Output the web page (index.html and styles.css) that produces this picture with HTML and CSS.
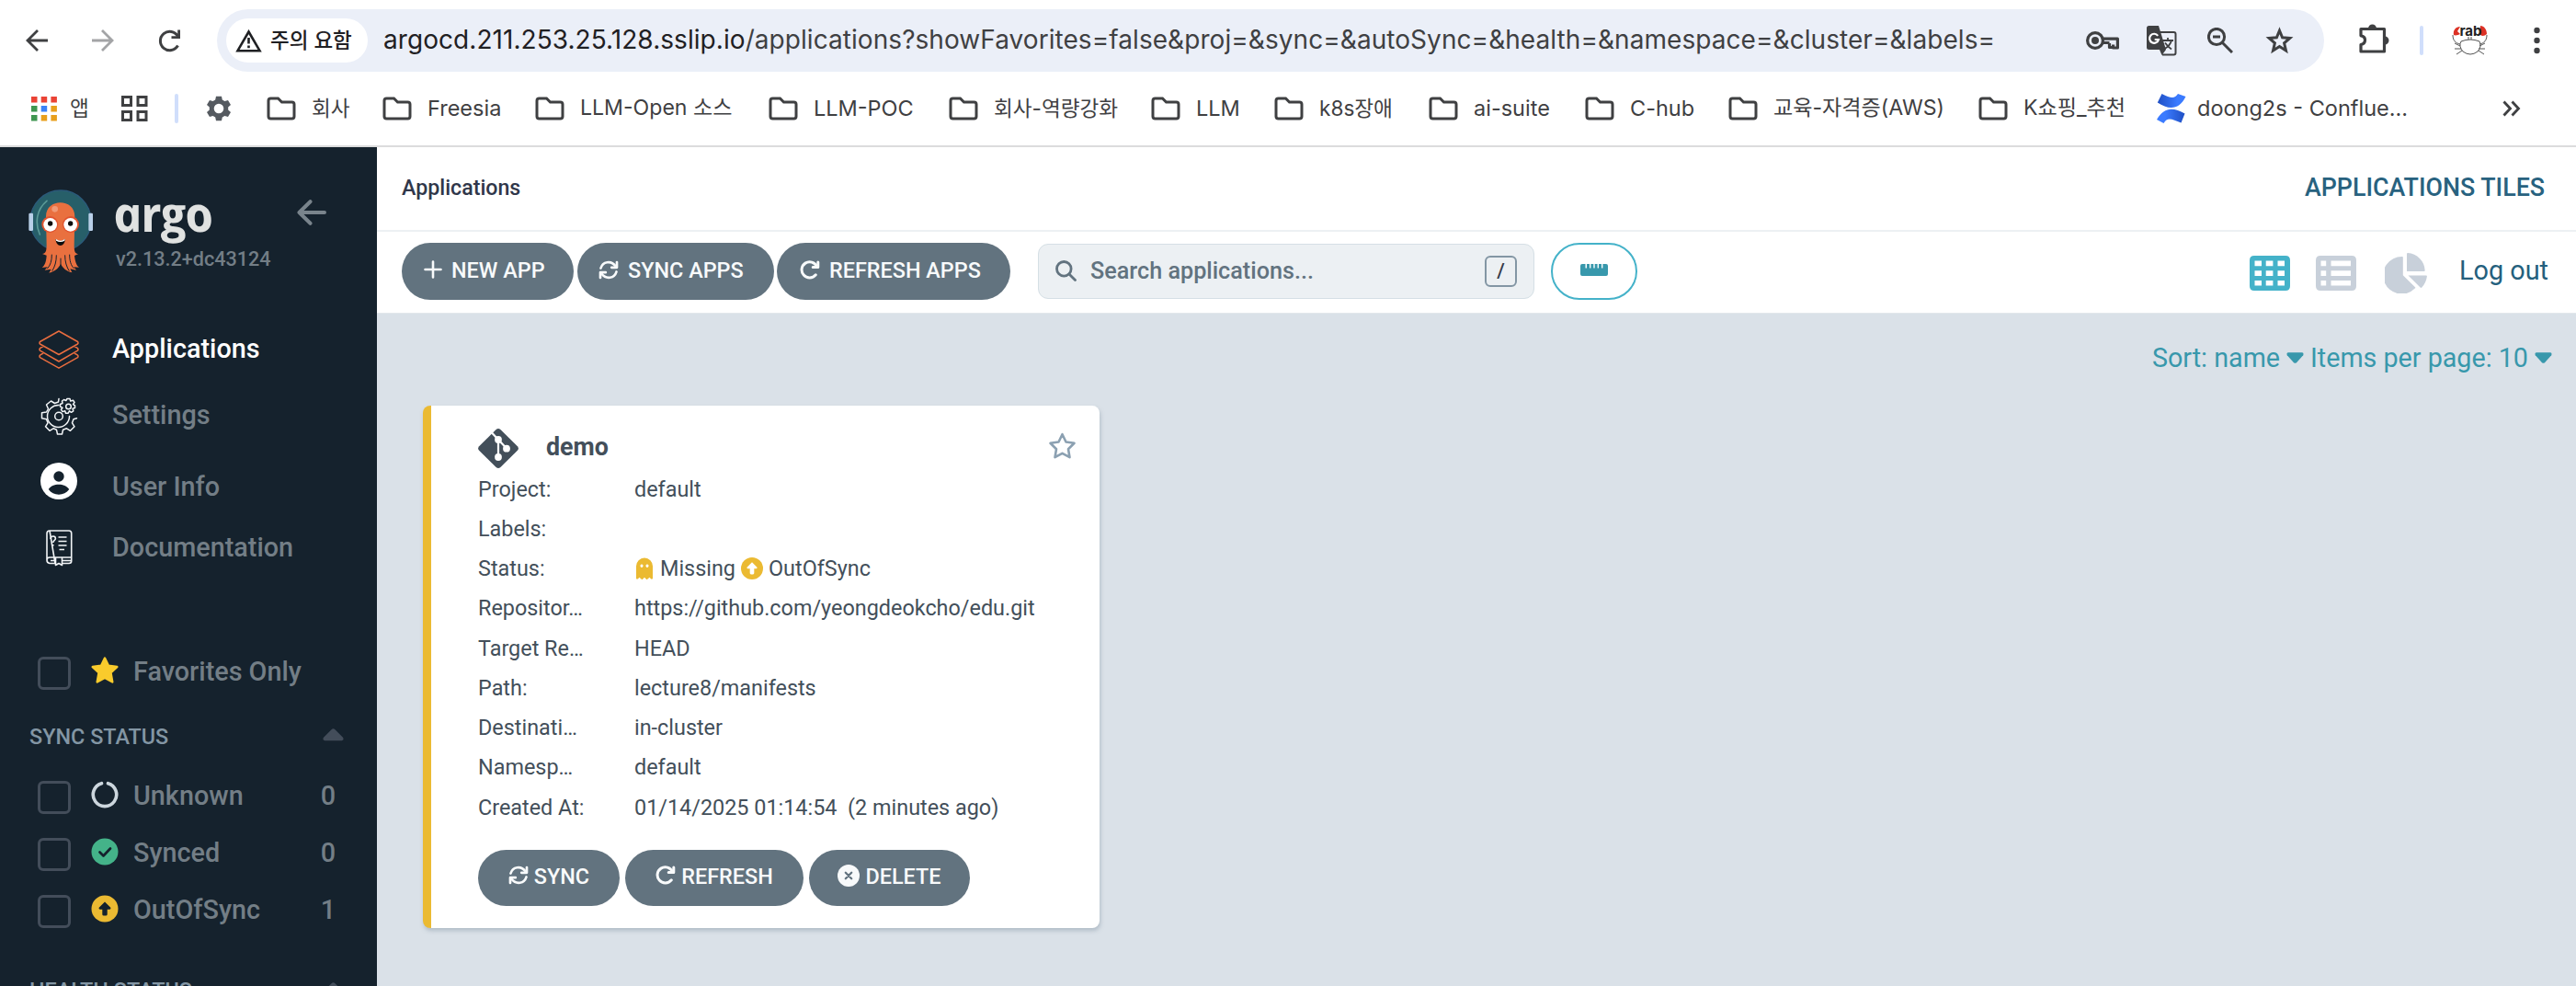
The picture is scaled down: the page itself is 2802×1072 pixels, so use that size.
FILE: index.html
```html
<!DOCTYPE html>
<html lang="ko">
<head>
<meta charset="utf-8">
<title>Applications Tiles - Argo CD</title>
<link rel="stylesheet" href="styles.css">
</head>
<body>
<svg class="defs" width="0" height="0">
  <defs>
    <symbol id="folder" viewBox="0 0 32 26"><path d="M4.500 2h8l4 4h11a2.500 2.500 0 0 1 2.500 2.500v13a2.500 2.500 0 0 1-2.500 2.500h-23a2.500 2.500 0 0 1-2.500-2.500v-17a2.500 2.500 0 0 1 2.500-2.500z" fill="none" stroke="#3f4042" stroke-width="3"/></symbol>
    <symbol id="sync" viewBox="0 0 22 21"><g fill="none" stroke="#f8fafb" stroke-width="2.700" stroke-linecap="round" stroke-linejoin="round"><path d="M2.500 8.500C4.500 1.500 13.500-.500 18.700 6.500"/><path d="M20 2v5.800h-5.800"/><path d="M19.500 12.500C17.500 19.500 8.500 21.500 3.300 14.500"/><path d="M2 19v-5.800h5.800"/></g></symbol>
    <symbol id="refresh" viewBox="0 0 22 21"><g fill="none" stroke="#f8fafb" stroke-width="3" stroke-linecap="round" stroke-linejoin="round"><path d="M17.300 15.800A8.600 8.600 0 1 1 18.500 6.800"/><path d="M19.800 2v5.600h-5.600"/></g></symbol>
    <symbol id="caret-up" viewBox="0 0 23 14"><path d="M9.500 1.200q2-2 4 0l8.500 8.500q1.600 3-1.200 3.600H2.200q-2.800-.600-1.200-3.600z" fill="#434d5a"/></symbol>
    <symbol id="caret-down" viewBox="0 0 19 12"><path d="M8 11.200q1.500 1.200 3 0l7.200-8q1-2.400-1-3H1.800q-2 .600-1 3z" fill="#3898ac"/></symbol>
  </defs>
</svg>

<header class="browser">
  <div class="toolbar">
    <svg class="back" width="24" height="24" viewBox="0 0 24 24" fill="none" stroke="#3f4042" stroke-width="2.800"><path d="M24 12H2M13 1 2 12l11 11"/></svg>
    <svg class="forward" width="24" height="24" viewBox="0 0 24 24" fill="none" stroke="#a3a4a6" stroke-width="2.800"><path d="M0 12h22M11 1l11 11-11 11"/></svg>
    <svg class="reload" width="25" height="25" viewBox="0 0 25 25"><path d="M21.500 17.500A10.200 10.200 0 1 1 21.500 7.500" fill="none" stroke="#3f4042" stroke-width="3"/><path d="M24 .5V10H14.500V7.200h6.700V.5z" fill="#3f4042"/></svg>
    <div class="omnibox">
      <div class="chip">
        <svg width="29" height="25" viewBox="0 0 29 25"><path d="M14.500 2.500 26.500 23.200H2.500z" fill="none" stroke="#1f2023" stroke-width="2.600"/><path d="M14.500 9v6.500M14.500 17.500v2.800" stroke="#1f2023" stroke-width="2.600"/></svg>
        <span class="t">주의 요함</span>
      </div>
      <span class="url t"><b>argocd.211.253.25.128.sslip.io</b>/applications?showFavorites=false&amp;proj=&amp;sync=&amp;autoSync=&amp;health=&amp;namespace=&amp;cluster=&amp;labels=</span>
      <div class="omni-icons">
        <svg width="36" height="20" viewBox="0 0 36 20"><circle cx="10" cy="10" r="8.400" fill="none" stroke="#3f4042" stroke-width="3.200"/><circle cx="10" cy="10" r="4" fill="#3f4042"/><path d="M18 8.200h16.400V18h-4.800v-3.500M25.500 13v4.500h4.500M18 12.500h7.500" fill="none" stroke="#3f4042" stroke-width="3.200" stroke-linejoin="round"/></svg>
        <svg width="33" height="33" viewBox="0 0 33 33"><path d="M14 7h15.500a2 2 0 0 1 2 2v20.500a2 2 0 0 1-2 2H17" fill="none" stroke="#3f4042" stroke-width="2"/><path d="M2.500 0H13l8 26-4.500 6-2.500-6H2.500A2.500 2.500 0 0 1 0 23.500v-21A2.500 2.500 0 0 1 2.500 0z" fill="#3f4042"/><path d="M17 16h12M23 13v3M27 16c-1 4-4 7-7.500 9M20 18.500c2 3 4 5 7 7" fill="none" stroke="#3f4042" stroke-width="1.800"/><path d="M12.200 10.800A5 5 0 1 0 13 15H8.700" fill="none" stroke="#fff" stroke-width="2.200"/></svg>
        <svg width="28" height="28" viewBox="0 0 28 28" fill="none" stroke="#3f4042" stroke-width="3"><circle cx="10" cy="10" r="8.600"/><path d="M16.500 16.500 27 27M6 10h8"/></svg>
        <svg width="31" height="30" viewBox="0 0 31 30"><path d="M15.500 4.200l3.100 7.600 8.200.7-6.200 5.400 1.900 8.100-7-4.400-7 4.400 1.900-8.100-6.200-5.400 8.200-.7z" fill="none" stroke="#3f4042" stroke-width="3"/></svg>
      </div>
    </div>
    <svg class="puzzle" width="33" height="33" viewBox="0 0 33 33"><path d="M2 5.500h25.500V30H2v-7.500c6-1 6-9 0-9.700z" fill="none" stroke="#3f4042" stroke-width="3.200" stroke-linejoin="round"/><path d="M10 5a4.500 4.500 0 0 1 9 0zM28 13.500a4.500 4.500 0 0 1 0 9z" fill="#3f4042"/></svg>
    <i class="vline"></i>
    <svg class="crab" width="40" height="36" viewBox="0 0 40 36"><path d="M9 3C4 3 1 7 2 12c2 1 5 0 7-1L6 8zM31 2c4 0 7 4 7 9-3 3-7 2-8 0z" fill="#dc3125"/><g fill="none" stroke="#555" stroke-width="1"><path d="M1 12c0 6 3 9 8 10M38 12c0 6-3 9-8 10"/><path d="M10 19q10-4 20 0 3 5-2 11-8 6-16 0-5-6-2-11zM3 21l6 3M3 27l7 0M5 33l6-4M36 21l-6 3M36 27h-7M35 33l-6-4M18 14v3M21 14v3"/></g><text x="20.500" y="13" text-anchor="middle" class="crab-text">rab</text></svg>
    <svg class="dots" width="7" height="30" viewBox="0 0 7 30" fill="#3f4042"><circle cx="3.500" cy="4" r="3.200"/><circle cx="3.500" cy="15" r="3.200"/><circle cx="3.500" cy="26" r="3.200"/></svg>
  </div>
  <nav class="bookmarks">
    <span class="bm ko apps"><svg width="28" height="28" viewBox="0 0 28 28"><path d="M0 1h6.500v6.500H0zM10.700 1h6.500v6.500h-6.500zM21.400 1h6.500v6.500h-6.500z" fill="#ea4335"/><path d="M0 11h6.500v6.500H0zM0 21h6.500v6.500H0z" fill="#3f9650"/><path d="M10.700 11h6.500v6.500h-6.500z" fill="#3b82f6"/><path d="M21.400 11h6.500v6.500h-6.500zM10.700 21h6.500v6.500h-6.500zM21.400 21h6.500v6.500h-6.500z" fill="#e89f1c"/></svg><span class="t">앱</span></span>
    <svg width="29" height="28" viewBox="0 0 29 28" fill="none" stroke="#3f4042" stroke-width="3"><path d="M1.500 1.500h9v9h-9zM18 1.500h9v9h-9zM1.500 17.500h9v9h-9zM18 17.500h9v9h-9z"/></svg>
    <i class="vline"></i>
    <svg width="28" height="28" viewBox="0 0 28 28"><path d="M14 8.700a5.300 5.300 0 1 0 0 10.600 5.300 5.300 0 0 0 0-10.600zM11 .8h6l.8 3.700 2.600 1.500 3.600-1.100 3 5.100-2.800 2.500v3l2.800 2.500-3 5.100-3.600-1.100-2.600 1.500-.8 3.700h-6l-.8-3.700-2.600-1.500L4 23.100 1 18l2.800-2.500v-3L1 10l3-5.100L7.600 6l2.600-1.500z" fill="#555a60" fill-rule="evenodd"/></svg>
    <span class="bm ko"><svg width="32" height="26"><use href="#folder"/></svg><span class="t">회사</span></span>
    <span class="bm"><svg width="32" height="26"><use href="#folder"/></svg><span class="t">Freesia</span></span>
    <span class="bm mix"><svg width="32" height="26"><use href="#folder"/></svg><span class="t">LLM-Open 소스</span></span>
    <span class="bm"><svg width="32" height="26"><use href="#folder"/></svg><span class="t">LLM-POC</span></span>
    <span class="bm ko"><svg width="32" height="26"><use href="#folder"/></svg><span class="t">회사-역량강화</span></span>
    <span class="bm"><svg width="32" height="26"><use href="#folder"/></svg><span class="t">LLM</span></span>
    <span class="bm ko"><svg width="32" height="26"><use href="#folder"/></svg><span class="t">k8s장애</span></span>
    <span class="bm"><svg width="32" height="26"><use href="#folder"/></svg><span class="t">ai-suite</span></span>
    <span class="bm"><svg width="32" height="26"><use href="#folder"/></svg><span class="t">C-hub</span></span>
    <span class="bm mix"><svg width="32" height="26"><use href="#folder"/></svg><span class="t">교육-자격증(AWS)</span></span>
    <span class="bm mix"><svg width="32" height="26"><use href="#folder"/></svg><span class="t">K쇼핑_추천</span></span>
    <span class="bm conf"><svg width="32" height="32" viewBox="0 0 32 32"><defs><linearGradient id="cf1" x1="0" x2="1"><stop offset="0" stop-color="#1f4fc4"/><stop offset=".7" stop-color="#3b7bff"/></linearGradient><linearGradient id="cf2" x1="1" x2="0"><stop offset="0" stop-color="#1f4fc4"/><stop offset=".7" stop-color="#3b7bff"/></linearGradient></defs><path d="M5.500 0 .8 9.500C13 17.500 24 18 31.500 3L23 0c-4 6-8 4.500-17.500 0z" fill="url(#cf1)"/><path d="M26.500 31.500 30.500 21.500C18 14.500 8 14 0 28l7.500 4c4-7 8.500-5 19-.5z" fill="url(#cf2)"/></svg><span class="t">doong2s - Conflue...</span></span>
    <svg width="20" height="18" viewBox="0 0 20 18" fill="none" stroke="#3f4042" stroke-width="2.800"><path d="M1.500 1.500 8.500 9l-7 7.500M10.500 1.500l7 7.500-7 7.500"/></svg>
  </nav>
</header>

<div class="app">
  <aside class="sidebar">
    <div class="brand">
      <svg class="octopus" width="71" height="91" viewBox="92 138 213 273">
        <circle cx="197" cy="240" r="99" fill="#275f69" stroke="#2b5a7a" stroke-width="4"/>
        <path d="M152 175c-34 28-40 72-23 110" fill="none" stroke="#5b9a97" stroke-width="5" stroke-linecap="round"/>
        <rect x="93" y="215" width="14" height="58" rx="4" fill="#b8cfe8"/><rect x="288" y="215" width="14" height="58" rx="4" fill="#b8cfe8"/>
        <path d="M149 226c0-60 94-60 94 0l-2 95c0 22 4 27 14 27l-13 6c2 18 6 32 15 38l-17-1 8 10-20-4 6 12c-20-4-30-16-37-28-8 14-17 24-38 29l7-12-21 3 9-10-18 2c10-8 14-22 15-40l-14-5c11-2 14-8 14-30z" fill="#e9703f"/>
        <path d="M168 350c0 20-4 36-15 46M183 352c0 22-5 38-14 52M197 362v30M211 352c0 22 5 38 14 52M226 350c0 20 4 36 15 46" stroke="#15222d" stroke-width="3" fill="none"/>
        <circle cx="178" cy="202" r="10" fill="#f09a77"/>
        <circle cx="162" cy="252" r="27" fill="#e0532f"/><circle cx="230" cy="252" r="27" fill="#e0532f"/>
        <circle cx="163" cy="253" r="22" fill="#fff"/><circle cx="229" cy="253" r="22" fill="#fff"/>
        <circle cx="163" cy="249" r="8" fill="#0d0d0d"/><circle cx="229" cy="249" r="8" fill="#0d0d0d"/>
        <path d="M180 300q17 12 32 0-3 21-16 21-13 0-16-21z" fill="#0d0d0d"/><path d="M181 299q16 12 30 0l-1 6q-14 8-28 0z" fill="#fff"/>
      </svg>
      <div class="brand-text">
        <span class="wordmark t">argo</span>
        <span class="version t">v2.13.2+dc43124</span>
      </div>
      <svg class="collapse" width="32" height="28" viewBox="0 0 32 28" fill="none" stroke="#79848c" stroke-width="4" stroke-linecap="round" stroke-linejoin="round"><path d="M30 14H2.500M14.500 2.200 2.500 14l12 11.800"/></svg>
    </div>
    <nav class="nav">
      <a class="nav-row active"><svg width="44" height="42" viewBox="0 0 44 42" fill="none" stroke="#e96d3f" stroke-width="1.500" stroke-linejoin="round"><path d="M22 1 42.500 12.500q1 1.500 0 2.500L22 26.500 1.500 15q-1-1 0-2.500zM5 17.500l-3.500 2.200q-1 1.300 0 2.500L22 34l20.500-11.800q1-1.200 0-2.500L39 17.500M5 25l-3.500 2.200q-1 1.300 0 2.500L22 41.200l20.500-11.500q1-1.200 0-2.500L39 25"/></svg><span class="t">Applications</span></a>
      <a class="nav-row"><svg width="44" height="42" viewBox="0 0 44 42" fill="none" stroke="#f2f5f7" stroke-width="1.500" stroke-linejoin="round" stroke-linecap="round"><path d="M22 2.500l-.5 3.500-4 1.500-4-2.500-5 4 2 4.500-2 3.500-5 .8v6l5 1 1.500 4-2.500 4 4.500 4.500 4-2.500 3.500 1.500 1 4.700h5l1-4.700 4-1.500 4 2.500 4.500-4.500-2.500-4 1.500-4 3.500-1"/><path d="M22 9.500a12 12 0 1 0 11.500 12"/><circle cx="22" cy="21.500" r="4.300"/><path d="M31 2.500h3l.7 2.500 2.800-.8 1.500 2.300-1.500 2.200 2 1.300v2.500l-2.500.8.8 2.500-2.300 1.500-2-1.500-1.500 2.500h-2.500l-.8-2.500-2.700.8-1.500-2.300 1.500-2-2.500-1.300v-2.500l2.500-1-.5-2.500 2-1.500 2.300 1z"/><circle cx="32.500" cy="11" r="2.800"/></svg><span class="t">Settings</span></a>
      <a class="nav-row user"><svg width="44" height="42" viewBox="0 0 44 42"><circle cx="22" cy="21" r="20" fill="#fff"/><circle cx="22" cy="16" r="5.700" fill="#15222d"/><path d="M10.800 30c4-7 18-7 22.400 0-5 7.500-17.500 7.500-22.400 0z" fill="#15222d"/></svg><span class="t">User Info</span></a>
      <a class="nav-row"><svg width="44" height="42" viewBox="0 0 44 42" fill="none" stroke="#f2f5f7" stroke-width="1.600" stroke-linejoin="round"><path d="M12 2h21q2.700 0 2.700 2.700V35q0 2.500-2.700 2.500h-7M18 37.500h-6Q9 37 9 34V5q0-3 3-3zM9 34q0-3 3-3h23.500M13 34.500h5M26 34.500h9.500M18.500 31v8.500l3.500-2 3.500 2V31"/><path d="M21.500 9h9M21.500 13.500h9M21.500 18h9M22.500 22.500h5.500M13 11q.300-3 2.800-3t2.600 2.500c0 2-2.600 2-2.600 4.500m0 2v1.500"/></svg><span class="t">Documentation</span></a>
    </nav>
    <div class="filters">
      <label class="filter fav"><i class="check"></i><svg width="30" height="30" viewBox="0 0 30 30"><path d="M15 1.500l4 8.300 9.300 1.200-6.800 6.300 1.800 10.200L15 23l-8.300 4.500 1.800-10.200L1.700 11l9.300-1.200z" fill="#f9cb2c" stroke="#f9cb2c" stroke-width="2.400" stroke-linejoin="round"/></svg><span class="t">Favorites Only</span></label>
      <div class="group"><span class="t">SYNC STATUS</span><svg width="23" height="14"><use href="#caret-up"/></svg></div>
      <label class="filter"><i class="check"></i><svg width="30" height="30" viewBox="0 0 30 30"><path d="M18.500 2.700a12.700 12.700 0 1 1-7 0" fill="none" stroke="#ccd6dd" stroke-width="3.600" stroke-linecap="round"/></svg><span class="t">Unknown</span><b>0</b></label>
      <label class="filter"><i class="check"></i><svg width="30" height="30" viewBox="0 0 30 30"><circle cx="15" cy="15" r="14.500" fill="#44b389"/><path d="M9.500 15.500l4 4 7.500-8" fill="none" stroke="#15222d" stroke-width="2.700" stroke-linecap="round" stroke-linejoin="round"/></svg><span class="t">Synced</span><b>0</b></label>
      <label class="filter"><i class="check"></i><svg width="30" height="30" viewBox="0 0 30 30"><circle cx="15" cy="15" r="14.500" fill="#ebba32"/><path d="M15 7.500l6.300 6.300q.8 1.600-1 2h-2.600v5.400q-.2 1.300-1.500 1.300h-2.400q-1.300 0-1.500-1.300v-5.400H9.700q-1.800-.4-1-2z" fill="#15222d"/></svg><span class="t">OutOfSync</span><b>1</b></label>
      <div class="group health"><span class="t">HEALTH STATUS</span><svg width="23" height="14"><use href="#caret-up"/></svg></div>
    </div>
  </aside>

  <main class="main">
    <div class="titlebar"><span class="crumb t">Applications</span><span class="page-title t">APPLICATIONS TILES</span></div>
    <div class="actions">
      <button class="btn new"><svg width="20" height="20" viewBox="0 0 20 20" stroke="#f8fafb" stroke-width="2.600" stroke-linecap="round"><path d="M10 1.500v17M1.500 10h17"/></svg><span class="t">NEW APP</span></button>
      <button class="btn sync"><svg width="22" height="21"><use href="#sync"/></svg><span class="t">SYNC APPS</span></button>
      <button class="btn refresh"><svg width="22" height="21"><use href="#refresh"/></svg><span class="t">REFRESH APPS</span></button>
      <div class="search">
        <svg width="23" height="23" viewBox="0 0 23 23" fill="none" stroke="#62737f" stroke-width="2.800" stroke-linecap="round"><circle cx="9.300" cy="9.300" r="7.800"/><path d="M15.200 15.200l6.300 6.300"/></svg>
        <span class="placeholder t">Search applications...</span>
        <kbd>/</kbd>
      </div>
      <button class="ruler"><svg width="30" height="13" viewBox="0 0 30 13"><path d="M2 0h3.500v4.500H7V0h3v4.500h1.400V0h2.900v4.500h1.400V0h2.900v4.500H20V0h3v4.500h1.400V0H28q2 0 2 2v9q0 2-2 2H2q-2 0-2-2V2q0-2 2-2z" fill="#3898ac"/></svg></button>
      <div class="views">
        <svg width="44" height="38" viewBox="0 0 44 38"><path fill-rule="evenodd" fill="#44b2c9" d="M5 0h34q5 0 5 5v28q0 5-5 5H5q-5 0-5-5V5q0-5 5-5zM5.500 5.500v5.800H13V5.500zM17.700 5.500v5.800h7.700V5.500zM30.500 5.500v5.800H38V5.500zM5.500 16.300v5.800H13v-5.800zM17.700 16.300v5.800h7.700v-5.800zM30.500 16.300v5.800H38v-5.800zM5.500 27v5.500H13V27zM17.700 27v5.500h7.700V27zM30.500 27v5.500H38V27z"/></svg>
        <svg width="44" height="38" viewBox="0 0 44 38"><path fill-rule="evenodd" fill="#c8d0da" d="M5 0h34q5 0 5 5v28q0 5-5 5H5q-5 0-5-5V5q0-5 5-5zM5.500 5.500v5.800h5.700V5.500zM16.500 5.500v5.800H38V5.500zM5.500 16.300v5.800h5.700v-5.800zM16.500 16.300v5.800H38v-5.800zM5.500 27v5.500h5.700V27zM16.500 27v5.500H38V27z"/></svg>
        <svg class="pie" width="47" height="44" viewBox="0 0 47 44" fill="#c8d0da"><path d="M19 4q.800-.100.800.800V24.300l13.200 13q.700.700-.200 1.300A20.300 20.300 0 1 1 19 4z"/><path d="M24 1q0-1 1-1A20 20 0 0 1 43.700 19q0 1-1 1H24zM25.500 24.500H45q1 0 .900 1-1 7-5.600 12-.8.900-1.700 0z"/></svg>
        <span class="logout t">Log out</span>
      </div>
    </div>
    <section class="content">
      <div class="sortbar"><span class="t">Sort: name</span><svg width="19" height="12"><use href="#caret-down"/></svg><span class="items t">Items per page: 10</span><svg width="19" height="12"><use href="#caret-down"/></svg></div>
      <article class="card">
        <div class="card-head">
          <svg width="44" height="43" viewBox="0 0 44 43"><path d="M19.600 1q2.400-2 4.800 0l18.500 18.200q2 2.300 0 4.600L24.400 42q-2.400 2-4.800 0L1.100 23.800q-2-2.300 0-4.600z" fill="#434f5a"/><path d="M15 4.500 31 21.500M22 12v19" stroke="#fff" stroke-width="2.200"/><circle cx="22" cy="12" r="3.900" fill="#fff"/><circle cx="31" cy="21.700" r="3.900" fill="#fff"/><circle cx="22" cy="31" r="3.900" fill="#fff"/></svg>
          <h2 class="t">demo</h2>
          <svg class="star" width="31" height="30" viewBox="0 0 31 30"><path d="M15.500 2.200l4 8.300 9 1.300-6.500 6.400 1.500 9-8-4.300-8 4.300 1.500-9-6.500-6.400 9-1.300z" fill="none" stroke="#8ba0b1" stroke-width="2.600" stroke-linejoin="round"/></svg>
        </div>
        <dl class="info">
          <dt class="t">Project:</dt><dd><span class="t">default</span></dd>
          <dt class="t">Labels:</dt><dd></dd>
          <dt class="t">Status:</dt><dd class="status"><svg width="22" height="24" viewBox="0 0 22 24"><path fill-rule="evenodd" fill="#ebba32" d="M2 23V9.500a9 9 0 0 1 18 0V23q-1 1.200-2 .3l-1.500-1.600-2.300 2q-.6.500-1.200 0L11 21.700l-2 2q-.6.500-1.200 0l-2.300-2L4 23.300q-1.200 1-2-.3zM8 7.500a1.500 1.700 0 1 0 .01 0zM14 7.500a1.500 1.700 0 1 0 .01 0z"/></svg><span class="t">Missing</span><svg width="24" height="24" viewBox="0 0 30 30"><circle cx="15" cy="15" r="15" fill="#ebba32"/><path d="M15 6.500l6.800 6.800q.8 1.600-1 2h-2.900v6.400q-.2 1.300-1.500 1.300h-2.800q-1.300 0-1.500-1.300v-6.400H9.200q-1.800-.4-1-2z" fill="#fff"/></svg><span class="t">OutOfSync</span></dd>
          <dt class="t">Repositor…</dt><dd><span class="t">https://github.com/yeongdeokcho/edu.git</span></dd>
          <dt class="t">Target Re…</dt><dd><span class="t">HEAD</span></dd>
          <dt class="t">Path:</dt><dd><span class="t">lecture8/manifests</span></dd>
          <dt class="t">Destinati…</dt><dd><span class="t">in-cluster</span></dd>
          <dt class="t">Namesp…</dt><dd><span class="t">default</span></dd>
          <dt class="t">Created At:</dt><dd><span class="t">01/14/2025 01:14:54 &nbsp;(2 minutes ago)</span></dd>
        </dl>
        <div class="card-actions">
          <button class="btn c1"><svg width="22" height="21"><use href="#sync"/></svg><span class="t">SYNC</span></button>
          <button class="btn c2"><svg width="22" height="21"><use href="#refresh"/></svg><span class="t">REFRESH</span></button>
          <button class="btn c3"><svg width="24" height="24" viewBox="0 0 24 24"><circle cx="12" cy="12" r="12" fill="#f8fafb"/><path d="M8.800 8.800l6.400 6.400M15.200 8.800l-6.400 6.400" stroke="#62737f" stroke-width="2.300" stroke-linecap="round"/></svg><span class="t">DELETE</span></button>
        </div>
      </article>
    </section>
  </main>
</div>
</body>
</html>
```
FILE: styles.css
```css
* { box-sizing: border-box; }
html, body { margin: 0; height: 100%; overflow: hidden; }
body { width: 2802px; height: 1072px; background: #fff; font-family: Roboto, "Noto Sans CJK KR", sans-serif; }
svg { display: block; flex: none; }
.defs { position: absolute; }
button { border: 0; padding: 0; font: inherit; }
.t { white-space: nowrap; }

.browser { height: 160px; border-bottom: 2px solid #dcdcdd; font-family: Inter, "Noto Sans CJK KR", sans-serif; color: #3f4042; background: #fff; line-height: 1.2; }
.toolbar { height: 88px; padding-left: 28px; display: flex; align-items: center; }
.forward, .reload { margin-left: 48px; }
.omnibox { margin-left: 39px; width: 2292px; height: 68px; border-radius: 34px; background: #ebeff8; display: flex; align-items: center; padding: 0 33px 0 10px; }
.chip { width: 154px; height: 48px; border-radius: 24px; background: #fff; display: flex; align-items: center; gap: 9px; padding-left: 10px; font-size: 22.500px; font-weight: 500; color: #1f2023; }
.chip .t { margin-top: -2px; }
.url { margin-left: 17px; font-size: 28px; letter-spacing: .06px; }
.url b { font-weight: 400; color: #1f2023; }
.omni-icons { margin-left: auto; display: flex; align-items: center; }
.omni-icons svg + svg { margin-left: 30px; }
.omni-icons svg:nth-child(3) { margin-left: 33px; }
.omni-icons svg:nth-child(4) { margin-left: 35px; }
.puzzle { margin: -4px 0 0 38px; }
.vline { width: 4px; height: 32px; border-radius: 2px; background: #d0defb; display: block; flex: none; }
.toolbar .vline { margin-left: 33px; }
.crab { margin-left: 31px; }
.crab-text { font: 700 15px/1 Inter, sans-serif; fill: #222; }
.dots { margin-left: 49px; }

.bookmarks { height: 60px; display: grid; align-items: center; padding-left: 34px; grid-template-columns: 98px 58px 34px 66px 126px 166px 254px 196px 220px 134px 168px 170px 156px 272px 194px 376px 20px; font-size: 23.500px; }
.bm { display: flex; align-items: center; gap: 17px; }
.bm.ko { font-size: 22.600px; }
.bm.mix { font-size: 23.100px; }
.bm.apps { gap: 14px; }
.bm.conf { gap: 12px; }

.app { height: 912px; display: flex; }
.sidebar { width: 410px; background: #15222d; color: #737e86; overflow: hidden; flex: none; }
.brand { height: 199px; padding: 46px 55px 0 31px; display: flex; }
.brand-text { margin-left: 24px; display: flex; flex-direction: column; align-items: flex-start; }
.wordmark { font-family: "Open Sans", sans-serif; font-style: italic; font-weight: 700; font-size: 53px; line-height: 64px; letter-spacing: -1.500px; margin: -6px 0 0 -4px; color: #e0e2e1; transform: skewX(12deg); }
.version { font-size: 21.600px; font-weight: 500; line-height: 26px; margin-top: 5px; }
.collapse { margin: 11px 0 0 auto; }
.nav-row { height: 42px; display: flex; align-items: center; padding-left: 42px; gap: 36px; font-size: 28.800px; font-weight: 500; }
.nav-row:nth-child(2) { margin-top: 30px; }
.nav-row:nth-child(3) { margin-top: 35px; }
.nav-row:nth-child(4) { margin-top: 25px; }
.nav-row .t { margin-top: -2px; }
.nav-row.user svg { margin-top: -12px; }
.nav-row.user .t { margin-top: 0; }
.active { color: #fff; }
.filters { padding-top: 94px; }
.filter { height: 40px; display: flex; align-items: center; padding: 0 45px 0 41px; font-size: 28.800px; font-weight: 500; }
.filter + .filter { margin-top: 22px; }
.filter svg { margin: -5px 16px 0 22px; }
.filter .t, .filter b { margin-top: -2px; }
.filter b { margin-left: auto; font-weight: 500; }
.check { width: 36px; height: 36px; border: 3px solid #434d5a; border-radius: 6px; margin-top: 2px; }
.group { height: 40px; margin: 30px 36px 25px 32px; display: flex; align-items: center; justify-content: space-between; font-size: 23.400px; font-weight: 500; color: #8396a4; }
.group svg { margin-top: -5px; }
.group.health { margin-top: 47px; }

.main { flex: 1; display: flex; flex-direction: column; }
.titlebar { height: 92px; border-bottom: 2px solid #edf0f3; display: flex; align-items: center; justify-content: space-between; padding: 0 34px 2px 27px; }
.crumb { font-size: 23.200px; font-weight: 500; color: #30374a; }
.page-title { font-size: 26.800px; font-weight: 500; color: #28627f; }
.actions { height: 88px; padding: 12px 30px 0 27px; display: flex; align-items: flex-start; }
.btn { height: 62px; border-radius: 31px; background: #62737f; color: #f8fafb; font-size: 23.400px; font-weight: 500; display: flex; align-items: center; flex: none; padding: 0 0 2px 24px; gap: 10px; }
.btn svg { margin-top: -2px; }
.new { width: 187px; }
.sync { width: 214px; margin-left: 4px; padding-left: 23px; }
.refresh { width: 254px; margin-left: 3px; padding-left: 25px; }
.search { margin: 1px 0 0 30px; width: 540px; height: 60px; border: 1px solid #d5dfe5; border-radius: 11px; background: #ecf0f3; display: flex; align-items: center; padding: 0 18px 2px; }
.placeholder { margin-left: 15px; font-size: 25.200px; font-weight: 500; color: #62737f; }
kbd { margin: 2px 0 0 auto; width: 35px; height: 34px; border: 2px solid #8396a4; border-radius: 6px; font: 500 22px/30px Roboto, sans-serif; text-align: center; color: #363c4a; }
.ruler { margin-left: 18px; width: 94px; height: 62px; border: 2px solid #44b2c9; border-radius: 31px; background: #fff; display: flex; justify-content: center; align-items: flex-start; padding-top: 21px; }
.views { margin: 14px 0 0 auto; display: flex; align-items: flex-start; height: 44px; }
.views svg + svg { margin-left: 28px; }
.views .pie { margin: -3px 0 0 31px; }
.logout { margin-left: 34px; font-size: 28.800px; line-height: 32px; color: #24607d; }

.content { flex: 1; background: #dae1e8; border-top: 1px solid #e3e8ec; }
.sortbar { height: 98px; display: flex; justify-content: flex-end; align-items: center; padding: 0 26px 2px 0; gap: 7px; font-size: 28.700px; color: #3898ac; }
.card { margin: 2px 0 0 50px; width: 736px; height: 568px; background: #fff; border-left: 9px solid #ebba32; border-radius: 8px; box-shadow: 1px 3px 4px rgba(140, 155, 170, .5); padding: 25px 25px 0 51px; }
.card-head { height: 43px; display: flex; align-items: center; color: #434f5a; }
h2 { margin: -4px auto 0 30px; font-size: 26.800px; font-weight: 700; }
.star { margin-top: -5px; }
.info { margin: 0; padding-top: 1px; display: grid; grid-template-columns: 170px 1fr; grid-auto-rows: 43.250px; align-items: center; font-size: 23.400px; color: #434f5a; }
dd { margin: 0; }
.status { display: flex; align-items: center; gap: 6px; }
.card-actions { margin-top: 25px; display: flex; gap: 6px; }
.card-actions .btn { height: 61px; padding: 0 0 4px; justify-content: center; gap: 6px; }
.c1 { width: 154px; }
.c2 { width: 194px; }
.c3 { width: 175px; }
```
